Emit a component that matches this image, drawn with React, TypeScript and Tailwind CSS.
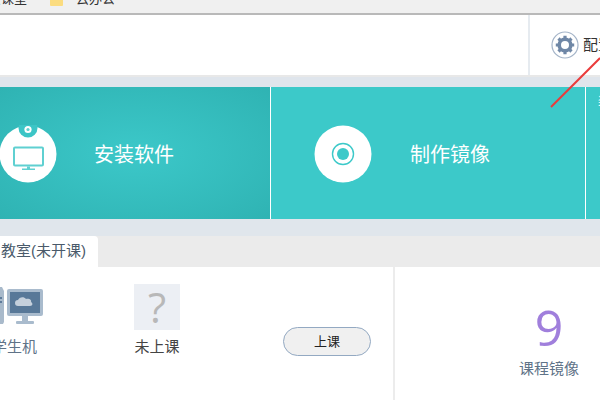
const CJK = "font-['Liberation_Sans','Noto_Sans_CJK_SC',sans-serif]";

function GearIcon() {
  return (
    <svg className="shrink-0" width="28" height="28" viewBox="0 0 28 28" fill="none">
      <circle cx="14" cy="14" r="13" fill="#fff" stroke="#a4b4c8" strokeWidth="1.2" />
      <circle cx="14" cy="14" r="5.8" stroke="#6f87a6" strokeWidth="3.6" />
      <g stroke="#6f87a6" strokeWidth="3.2">
        <path d="M14 4.8v3M14 20.2v3M4.8 14h3M20.2 14h3M7.5 7.5l2.1 2.1M18.4 18.4l2.1 2.1M7.5 20.5l2.1-2.1M18.4 9.6l2.1-2.1" />
      </g>
    </svg>
  );
}

function InstallIcon() {
  return (
    <svg className="shrink-0" width="58" height="58" viewBox="0 0 58 58">
      <circle cx="29" cy="29" r="28.5" fill="#fff" />
      <circle cx="29" cy="3" r="9.5" fill="#3cc5c6" />
      <circle cx="29" cy="4.5" r="3.6" fill="#fff" />
      <circle cx="29" cy="4.5" r="1.6" fill="#5fd0d1" />
      <rect x="15" y="22.5" width="29" height="18" rx="1" fill="none" stroke="#5fd0d1" strokeWidth="2" />
      <path d="M28 41.5h3v2h-3zM23 43.5h13v1.5H23z" fill="#5fd0d1" />
    </svg>
  );
}

function DiscIcon() {
  return (
    <svg className="shrink-0" width="58" height="58" viewBox="0 0 58 58">
      <circle cx="29" cy="29" r="28.5" fill="#fff" />
      <circle cx="29" cy="29" r="10.5" fill="none" stroke="#3cc9c9" strokeWidth="1.4" />
      <circle cx="29" cy="29" r="6" fill="#3cc9c9" />
    </svg>
  );
}

function StudentIcon() {
  return (
    <svg className="shrink-0" width="44" height="42" viewBox="0 0 44 42">
      <path d="M0 0h2l2 4v31l-1 2H0z" fill="#a9bacb" />
      <rect x="0" y="10" width="2" height="2" fill="#5f7c9b" />
      <rect x="0" y="14" width="2" height="2" fill="#5f7c9b" />
      <rect x="7" y="2" width="36" height="27" rx="2" fill="#a9bbcd" />
      <rect x="10" y="5" width="30" height="21" fill="#587898" />
      <path d="M18 19a3 3 0 0 1 0-6c1-3 6-4 8-1 3-1 6 1 5 3 2 1 2 4-1 4z" fill="#c5d0dc" />
      <rect x="22" y="29" width="6" height="5" fill="#a9bbcd" />
      <rect x="16" y="34" width="18" height="3" rx="1" fill="#a9bbcd" />
    </svg>
  );
}

export default function App() {
  return (
    <div className={`relative flex h-[400px] w-[600px] flex-col overflow-hidden bg-white ${CJK}`}>
      {/* window title strip, text cut off by the top edge */}
      <div className="flex h-[13px] items-start overflow-hidden bg-[#f0f0f0] text-[13px] leading-none text-[#333]">
        <span className="-mt-[8px] ml-[-12px] w-[50px] whitespace-nowrap">云课室</span>
        <span className="ml-[12px] h-[6px] w-[13px] rounded-b-[1px] bg-[#fbdc80]" />
        <span className="-mt-[8px] ml-[13px] whitespace-nowrap">云办公</span>
      </div>
      <div className="h-[2px] bg-[#b9b9b9]" />

      <div className="flex h-[60px] justify-end overflow-hidden bg-white">
        <div className="flex w-[72px] shrink-0 items-center border-l-2 border-[#e6ebf0] pl-[21px]">
          <GearIcon />
          <span className="ml-[4px] whitespace-nowrap text-[15px] text-[#333]">配置</span>
        </div>
      </div>
      <div className="h-[2px] bg-[#e8e8e8]" />
      <div className="h-[10px] bg-[#dfe5ec]" />

      <div className="flex h-[132px] bg-white">
        <div className="flex w-[270px] items-center bg-[radial-gradient(ellipse_at_center,#3cc8c9_0%,#2fb3b3_100%)] pt-[2px]">
          <div className="ml-[-1px]">
            <InstallIcon />
          </div>
          <span className="ml-[37px] mt-[1px] text-[20px] text-white">安装软件</span>
        </div>
        <div className="ml-px flex w-[314px] items-center bg-[#3cc9c9] pl-[43px] pt-[2px]">
          <DiscIcon />
          <span className="ml-[38px] mt-[1px] text-[20px] text-white">制作镜像</span>
        </div>
        <div className="ml-px flex-1 overflow-hidden bg-[#3cc9c9] pl-[12px] pt-[8px] text-[13px] leading-none text-white">
          <span className="whitespace-nowrap">装</span>
        </div>
      </div>

      <div className="h-[17px] bg-[#e0e6ec]" />

      <div className="flex h-[31px] bg-[#ebebeb]">
        <div className="flex w-[98px] items-center overflow-hidden whitespace-nowrap rounded-tr-[4px] bg-white text-[15px] text-[#4a5a6a]">
          <span className="ml-[1px]">教室(未开课)</span>
        </div>
      </div>

      <div className="flex flex-1 overflow-hidden">
        <div className="flex w-[393px] shrink-0">
          <div className="flex w-[44px] flex-col items-end pt-[20px]">
            <StudentIcon />
            <span className="mr-[7px] mt-[8px] w-[45px] whitespace-nowrap text-[15px] leading-[20px] text-[#5f7388]">学生机</span>
          </div>
          <div className="ml-[90px] flex w-[46px] flex-col items-center pt-[17px]">
            <div className="flex h-[46px] w-[46px] items-center justify-center bg-[#eceff4] font-['Open_Sans',sans-serif] text-[42px] leading-none text-[#b8b8b8]">?</div>
            <span className="mt-[7px] whitespace-nowrap text-[15px] leading-[20px] text-[#444]">未上课</span>
          </div>
          <div className="ml-[103px] mt-[60px]">
            <button className="h-[29px] w-[88px] rounded-full border border-[#93a9c2] bg-[#f0f0f0] text-[13px] text-[#222]">上课</button>
          </div>
        </div>
        <div className="flex w-[310px] shrink-0 flex-col items-center border-l-2 border-[#ececec] pt-[30px]">
          <span className="font-['Open_Sans',sans-serif] text-[50px] leading-[60px] text-[#a07fdc]">9</span>
          <span className="mt-[2px] text-[15px] leading-[20px] text-[#5f7388]">课程镜像</span>
        </div>
      </div>

      {/* annotation arrow drawn over the screenshot */}
      <svg className="absolute left-0 top-0" width="600" height="400" fill="none">
        <path d="M551 107L600 58" stroke="#ea3b3b" strokeWidth="2" />
      </svg>
    </div>
  );
}
